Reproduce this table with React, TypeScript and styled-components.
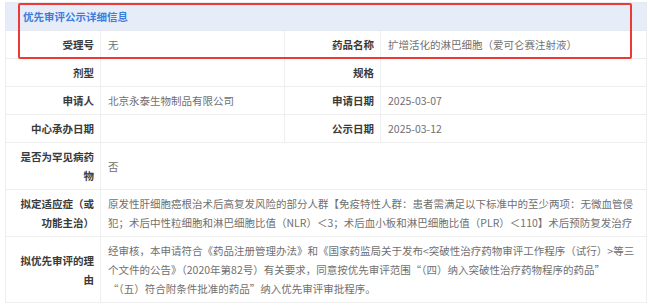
import styled, { createGlobalStyle } from 'styled-components';

const GlobalStyle = createGlobalStyle`
  html, body {
    margin: 0;
    padding: 0;
    background: #fff;
  }
  body {
    font-family: "Noto Sans CJK SC", "Noto Sans", sans-serif;
  }
`;

const Page = styled.div`
  position: relative;
  width: 650px;
  height: 308px;
  padding: 2px 4px 0 5px;
  box-sizing: border-box;
  overflow: hidden;
`;

const Table = styled.table`
  width: 641px;
  border-collapse: collapse;
  table-layout: fixed;
  font-size: 10.5px;
  line-height: 19px;
`;

const HeaderCell = styled.th`
  height: 28px;
  padding: 0 0 0 17px;
  background: #e7edf8;
  border: 1px solid #e6e9ef;
  color: #3b7ddd;
  font-weight: 700;
  text-align: left;
  box-sizing: border-box;
`;

const Label = styled.th`
  padding: 4px 6px 4px 10px;
  border: 1px solid #eeeeee;
  color: #3a3a3a;
  font-weight: 700;
  text-align: right;
  vertical-align: middle;
  background: #fff;
`;

const Value = styled.td<{ $nowrap?: boolean }>`
  padding: 4px 6px 4px 7px;
  border: 1px solid #eeeeee;
  color: #707070;
  vertical-align: middle;
  white-space: ${(p) => (p.$nowrap ? 'nowrap' : 'normal')};
  overflow: hidden;
`;

const Line = styled.span`
  display: block;
  white-space: nowrap;
`;

const Highlight = styled.div`
  position: absolute;
  left: 18px;
  top: 3px;
  width: 614px;
  height: 56px;
  border: 2px solid #ee3a36;
  border-radius: 2px;
  box-sizing: border-box;
  pointer-events: none;
`;

const App = () => {
  return (
    <>
      <GlobalStyle />
      <Page>
        <Table>
          <colgroup>
            <col style={{ width: 95 }} />
            <col style={{ width: 184 }} />
            <col style={{ width: 96 }} />
            <col style={{ width: 266 }} />
          </colgroup>
          <thead>
            <tr>
              <HeaderCell colSpan={4}>优先审评公示详细信息</HeaderCell>
            </tr>
          </thead>
          <tbody>
            <tr>
              <Label>受理号</Label>
              <Value>无</Value>
              <Label>药品名称</Label>
              <Value $nowrap>扩增活化的淋巴细胞（爱可仑赛注射液）</Value>
            </tr>
            <tr>
              <Label>剂型</Label>
              <Value />
              <Label>规格</Label>
              <Value />
            </tr>
            <tr>
              <Label>申请人</Label>
              <Value>北京永泰生物制品有限公司</Value>
              <Label>申请日期</Label>
              <Value>2025-03-07</Value>
            </tr>
            <tr>
              <Label>中心承办日期</Label>
              <Value />
              <Label>公示日期</Label>
              <Value>2025-03-12</Value>
            </tr>
            <tr>
              <Label>是否为罕见病药物</Label>
              <Value colSpan={3}>否</Value>
            </tr>
            <tr>
              <Label>拟定适应症（或功能主治）</Label>
              <Value colSpan={3}>
                <Line>原发性肝细胞癌根治术后高复发风险的部分人群【免疫特性人群：患者需满足以下标准中的至少两项：无微血管侵</Line>
                <Line>犯；术后中性粒细胞和淋巴细胞比值（NLR）＜3；术后血小板和淋巴细胞比值（PLR）＜110】术后预防复发治疗</Line>
              </Value>
            </tr>
            <tr>
              <Label>拟优先审评的理由</Label>
              <Value colSpan={3}>
                <Line>经审核，本申请符合《药品注册管理办法》和《国家药监局关于发布&lt;突破性治疗药物审评工作程序（试行）&gt;等三</Line>
                <Line>个文件的公告》（2020年第82号）有关要求，同意按优先审评范围“（四）纳入突破性治疗药物程序的药品”</Line>
                <Line>“（五）符合附条件批准的药品”纳入优先审评审批程序。</Line>
              </Value>
            </tr>
          </tbody>
        </Table>
        <Highlight />
      </Page>
    </>
  );
};

export default App;
